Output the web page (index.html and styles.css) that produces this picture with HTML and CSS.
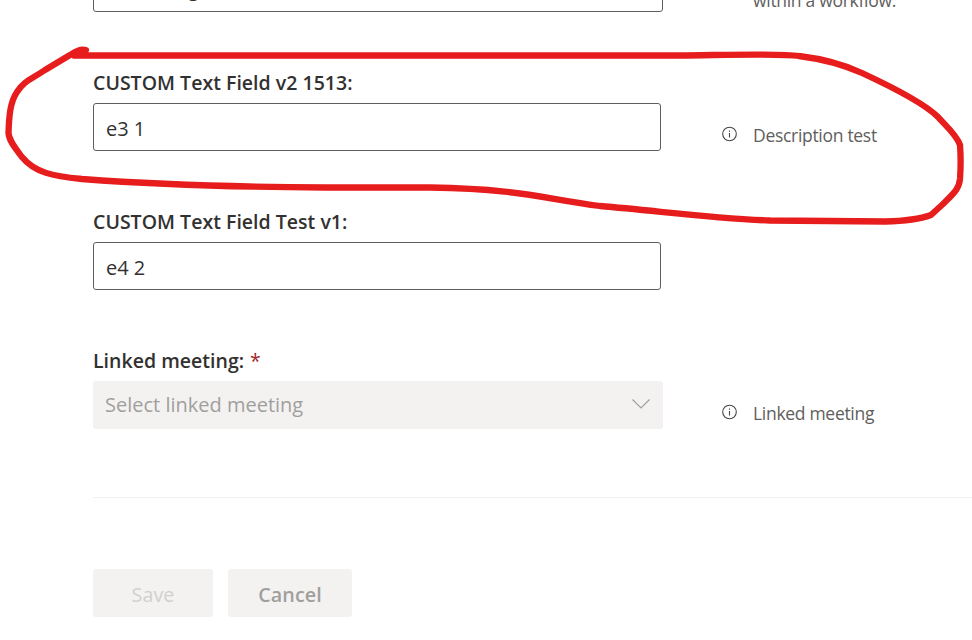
FILE: index.html
```html
<!DOCTYPE html>
<html lang="en">
<head>
<meta charset="utf-8">
<title>Edit item</title>
<link rel="stylesheet" href="styles.css">
</head>
<body>
<svg class="defs" aria-hidden="true">
  <symbol id="info" viewBox="0 0 16 16">
    <circle cx="7.500" cy="8" r="6.800" fill="none" stroke="currentColor" stroke-width="1.1"/>
    <path d="M7.500 7v4.400M7.500 4.400v1.300" stroke="currentColor" stroke-width="1.100"/>
  </symbol>
</svg>
<main class="form">
  <section class="row">
    <div class="field">
      <div class="label"></div>
      <div class="box wide clipped"><span>g</span></div>
    </div>
    <div class="hint first"><span>within a workflow.</span></div>
  </section>
  <section class="row">
    <div class="field">
      <div class="label"><span>CUSTOM Text Field v2 1513:</span></div>
      <div class="box"><span>e3 1</span></div>
    </div>
    <div class="hint"><svg class="info"><use href="#info"/></svg><span>Description test</span></div>
  </section>
  <section class="row">
    <div class="field">
      <div class="label"><span>CUSTOM Text Field Test v1:</span></div>
      <div class="box"><span>e4 2</span></div>
    </div>
  </section>
  <section class="row">
    <div class="field">
      <div class="label"><span>Linked meeting:</span><span class="required">*</span></div>
      <div class="box wide select"><span>Select linked meeting</span>
        <svg class="chevron" viewBox="0 0 20 12"><path d="M1.500 1.500L10 10l8.500-8.500" fill="none" stroke="currentColor" stroke-width="1.200"/></svg>
      </div>
    </div>
    <div class="hint"><svg class="info"><use href="#info"/></svg><span>Linked meeting</span></div>
  </section>
  <footer class="actions">
    <button class="button save" disabled><span>Save</span></button>
    <button class="button cancel"><span>Cancel</span></button>
  </footer>
</main>
<svg class="markup" viewBox="0 0 972 640" aria-hidden="true">
  <path d="M86 50C80 49 76 51 70 55L45 70C30 80 24 81 17 92C10 102 9 117 8.500 133C9 141 16 149 22 157C35 173 53 176 82 179C150 184 230 187 325 187.500L430 187.500C520 189 540 198 600 206C660 211 710 218 770 220.500L885 221.500C905 221 920 219 931 215L943 204C954 193 959 189 960 179C961 165 961 158 960 145C957 135 944 124 938 117C924 103 890 86 862 73C838 62 815 58 799 56C780 53 725 55 680 55.500L74 55.500" fill="none" stroke="#e71c1c" stroke-width="6.300" stroke-linecap="round" stroke-linejoin="round"/>
</svg>
</body>
</html>
```
FILE: styles.css
```css
* { box-sizing: border-box; }
html, body { margin: 0; height: 640px; overflow: hidden; background: #fff; }
body { font-family: "Open Sans", "Noto Sans", sans-serif; color: #323130; }
.defs { position: absolute; width: 0; height: 0; }
.form { margin: -70px 0 0 93px; }
.row { display: grid; grid-template-columns: 629px 1fr; height: 139px; }
.label { display: flex; gap: 6px; height: 28px; margin-bottom: 6px; font-size: 19.5px; font-weight: 600; line-height: 28px; letter-spacing: 0.02px; white-space: nowrap; }
.box { display: flex; align-items: center; width: 568px; height: 48px; padding: 4px 12px 0; border: 1px solid #605e5c; border-radius: 3px; font-size: 20px; line-height: 28px; }
.wide { width: 570px; }
.clipped { padding: 2px 0 0 94px; }
.select { justify-content: space-between; padding: 0 12px 0 12px; border: 0; background: #f3f2f1; color: #a19f9d; }
.chevron { width: 20px; height: 12px; margin-top: -2px; }
.required { color: #a4262c; font-weight: 400; }
.hint { display: flex; align-items: flex-start; gap: 15px; padding-top: 52px; font-size: 17.5px; line-height: 28px; letter-spacing: -0.3px; color: #605e5c; white-space: nowrap; }
.first { padding: 56px 0 0 31px; }
.info { width: 16px; height: 16px; margin-top: 5px; color: #484644; }
.actions { display: flex; gap: 15px; margin-top: 11px; padding-top: 71px; border-top: 1px solid #f3f2f1; }
.button { display: flex; justify-content: center; align-items: center; width: 120px; height: 48px; padding: 4px 0 0; border: 0; border-radius: 3px; background: #f3f2f1; font: 600 19.8px/28px "Open Sans", sans-serif; }
.save { color: #d2d0ce; font-weight: 400; }
.cancel { width: 124px; color: #a19f9d; }
.markup { position: absolute; inset: 0; width: 972px; height: 640px; pointer-events: none; }
```
